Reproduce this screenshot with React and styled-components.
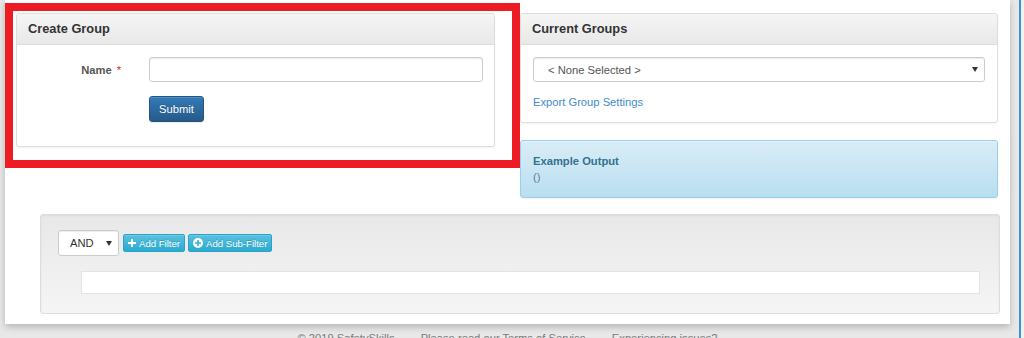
import React from "react";
import styled, { createGlobalStyle } from "styled-components";

const GlobalStyle = createGlobalStyle`
  html, body {
    margin: 0;
    padding: 0;
    background: #e8e8e8;
    font-family: "Liberation Sans", Arial, sans-serif;
    font-size: 11.2px;
    color: #333;
    overflow: hidden;
  }
  * {
    box-sizing: border-box;
  }
`;

const Screen = styled.div`
  display: flex;
  height: 338px;
  padding-left: 5px;
  overflow: hidden;
`;

const Column = styled.div`
  width: 1005px;
  display: flex;
  flex-direction: column;
`;

const Main = styled.div`
  position: relative;
  flex-shrink: 0;
  height: 324px;
  background: #fff;
  box-shadow: 0 3px 7px rgba(0, 0, 0, 0.22);
  padding-top: 13px;
`;

const Edge = styled.div`
  flex: 1;
  margin-left: 9px;
  border-left: 2px solid #3f8fd8;
  background: #f1f1f1;
`;

const Highlight = styled.div`
  position: absolute;
  left: 0;
  top: 3px;
  width: 515px;
  height: 165px;
  border: 8px solid #ed1c24;
  pointer-events: none;
`;

const Row = styled.div`
  display: grid;
  grid-template-columns: 479px 478px;
  column-gap: 25px;
  padding-left: 11px;
  align-items: start;
`;

const Stack = styled.div`
  display: flex;
  flex-direction: column;
  gap: 17px;
`;

const Panel = styled.div`
  background: #fff;
  border: 1px solid #ddd;
  border-radius: 3px;
  box-shadow: 0 1px 2px rgba(0, 0, 0, 0.05);
  overflow: hidden;
`;

const PanelHeading = styled.div`
  padding: 8px 11px;
  border-bottom: 1px solid #ddd;
  background: linear-gradient(to bottom, #f5f5f5 0, #e8e8e8 100%);
  font-size: 12.8px;
  line-height: 14px;
  font-weight: bold;
  color: #333;
`;

const PanelBody = styled.div`
  padding: 12px 12px ${(p) => p.$bottom || 12}px;
`;

const FormGrid = styled.div`
  display: grid;
  grid-template-columns: 108px 1fr;
  column-gap: 12px;
  row-gap: 14px;
  align-items: center;
`;

const Label = styled.label`
  text-align: right;
  padding-right: 16px;
  font-weight: bold;
  color: #555;
  line-height: 16px;
`;

const Required = styled.span`
  color: #e52d27;
  margin-left: 5px;
  font-weight: normal;
`;

const TextInput = styled.input`
  width: 334px;
  height: 25px;
  border: 1px solid #ccc;
  border-radius: 3px;
  box-shadow: inset 0 1px 1px rgba(0, 0, 0, 0.075);
  padding: 4px 10px;
  font: inherit;
`;

const PrimaryButton = styled.button`
  grid-column: 2;
  justify-self: start;
  width: 55px;
  height: 26px;
  padding: 0;
  border: 1px solid #245580;
  border-radius: 3px;
  background: linear-gradient(to bottom, #337ab7 0, #265a88 100%);
  color: #fff;
  font: inherit;
  text-shadow: 0 -1px 0 rgba(0, 0, 0, 0.2);
  box-shadow: inset 0 1px 0 rgba(255, 255, 255, 0.15), 0 1px 1px rgba(0, 0, 0, 0.075);
`;

const SelectBox = styled.div`
  display: flex;
  align-items: center;
  justify-content: space-between;
  width: ${(p) => p.$width || "100%"};
  height: ${(p) => p.$height || 25}px;
  padding: 0 6px 0 ${(p) => p.$pad || 14}px;
  border: 1px solid #ccc;
  border-radius: 3px;
  background: #fff;
  color: ${(p) => p.$color || "#555"};
  box-shadow: inset 0 1px 1px rgba(0, 0, 0, 0.075);
  line-height: 16px;
`;

const Caret = () => (
  <svg width="6" height="5" viewBox="0 0 6 5">
    <path d="M0 0h6L3 5z" fill="#333" />
  </svg>
);

const Link = styled.a`
  display: block;
  margin-top: 12px;
  color: #428bca;
  line-height: 16px;
  text-decoration: none;
`;

const Alert = styled.div`
  padding: 12px;
  border: 1px solid #9acfea;
  border-radius: 3px;
  background: linear-gradient(to bottom, #d9edf7 0, #b9def0 100%);
  color: #31708f;
  line-height: 16px;
  text-shadow: 0 1px 0 rgba(255, 255, 255, 0.2);
  box-shadow: inset 0 1px 0 rgba(255, 255, 255, 0.25), 0 1px 2px rgba(0, 0, 0, 0.05);
`;

const AlertTitle = styled.div`
  font-weight: bold;
`;

const Muted = styled.div`
  color: #5a7d95;
`;

const Well = styled.div`
  margin: 16px 10px 0 35px;
  height: 100px;
  padding: 15px 19px 19px 17px;
  border: 1px solid #dcdcdc;
  border-radius: 3px;
  background: linear-gradient(to bottom, #e8e8e8 0, #f5f5f5 100%);
  box-shadow: inset 0 1px 3px rgba(0, 0, 0, 0.05), 0 1px 0 rgba(255, 255, 255, 0.1);
`;

const Toolbar = styled.div`
  display: flex;
  align-items: center;
  gap: 3px;
`;

const InfoButton = styled.button`
  display: flex;
  align-items: center;
  gap: 3px;
  height: 18px;
  margin-left: ${(p) => p.$gap || 0}px;
  padding: 0 4px;
  border: 1px solid #28a4c9;
  border-radius: 2px;
  background: linear-gradient(to bottom, #5bc0de 0, #2aabd2 100%);
  color: #fff;
  font: inherit;
  font-size: 9.6px;
  text-shadow: 0 -1px 0 rgba(0, 0, 0, 0.2);
  box-shadow: inset 0 1px 0 rgba(255, 255, 255, 0.15);
`;

const PlusIcon = () => (
  <svg width="8" height="8" viewBox="0 0 8 8">
    <path d="M3 0h2v3h3v2H5v3H3V5H0V3h3z" fill="#fff" />
  </svg>
);

const PlusSignIcon = () => (
  <svg width="10" height="10" viewBox="0 0 10 10">
    <circle cx="5" cy="5" r="5" fill="#fff" />
    <path d="M4.2 2h1.6v2.2H8v1.6H5.8V8H4.2V5.8H2V4.2h2.2z" fill="#38b1d6" />
  </svg>
);

const FilterBar = styled.div`
  height: 23px;
  margin: 15px 0 0 23px;
  background: #fff;
  border: 1px solid #e3e3e3;
`;

const Footer = styled.div`
  display: flex;
  justify-content: center;
  gap: 26px;
  padding-top: 6px;
  color: #7a7a7a;
  line-height: 16px;
`;

export default function App() {
  return (
    <>
      <GlobalStyle />
      <Screen>
        <Column>
          <Main>
            <Row>
              <Panel>
                <PanelHeading>Create Group</PanelHeading>
                <PanelBody $bottom={24}>
                  <FormGrid>
                    <Label>
                      Name<Required>*</Required>
                    </Label>
                    <TextInput type="text" />
                    <PrimaryButton>Submit</PrimaryButton>
                  </FormGrid>
                </PanelBody>
              </Panel>
              <Stack>
                <Panel>
                  <PanelHeading>Current Groups</PanelHeading>
                  <PanelBody>
                    <SelectBox>
                      <span>&lt; None Selected &gt;</span>
                      <Caret />
                    </SelectBox>
                    <Link href="#">Export Group Settings</Link>
                  </PanelBody>
                </Panel>
                <Alert>
                  <AlertTitle>Example Output</AlertTitle>
                  <Muted>()</Muted>
                </Alert>
              </Stack>
            </Row>
            <Well>
              <Toolbar>
                <SelectBox $width="61px" $height={26} $pad={11} $color="#333">
                  <span>AND</span>
                  <Caret />
                </SelectBox>
                <InfoButton $gap={1}>
                  <PlusIcon />
                  Add Filter
                </InfoButton>
                <InfoButton>
                  <PlusSignIcon />
                  Add Sub-Filter
                </InfoButton>
              </Toolbar>
              <FilterBar />
            </Well>
            <Highlight />
          </Main>
          <Footer>
            <span>© 2019 SafetySkills</span>
            <span>Please read our Terms of Service</span>
            <span>Experiencing issues?</span>
          </Footer>
        </Column>
        <Edge />
      </Screen>
    </>
  );
}
